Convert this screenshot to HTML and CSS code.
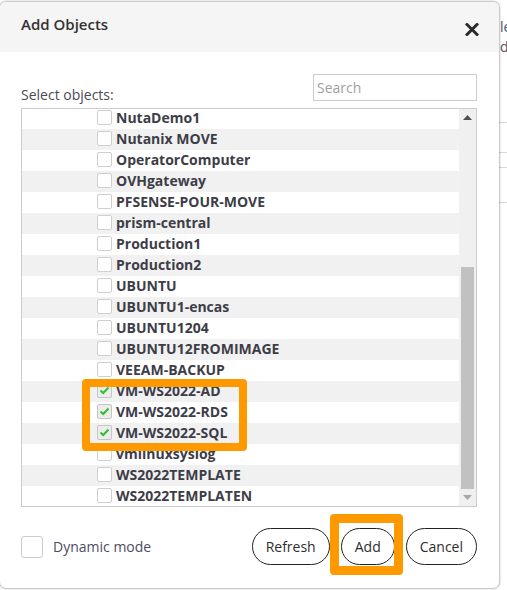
FILE: index.html
```html
<!DOCTYPE html>
<html>
<head>
<meta charset="utf-8">
<link rel="stylesheet" href="styles.css">
</head>
<body>
<div class="page">
  <div class="page-main"></div>
  <div class="page-side">
    <div class="side-text">le<br>d</div>
    <div class="side-line line-a"></div>
    <div class="side-line line-b"></div>
    <div class="side-line line-c"></div>
    <div class="side-line line-d"></div>
  </div>
</div>

<div class="modal">
  <div class="modal-header">
    <h2 class="modal-title">Add Objects</h2>
    <span class="close">
      <svg width="14" height="13" viewBox="0 0 14 13"><path d="M2 1.5 L12 11.5 M12 1.5 L2 11.5" stroke="#2b2b2b" stroke-width="3" stroke-linecap="square"/></svg>
    </span>
  </div>
  <div class="modal-body">
    <div class="toolbar">
      <span class="toolbar-label">Select objects:</span>
      <input class="search" type="text" placeholder="Search">
    </div>
    <div class="listbox">
      <div class="list-viewport">
        <div class="list-rows">
          <div class="row"><span class="cb"></span><span class="name">NutaDemo1</span></div>
          <div class="row alt"><span class="cb"></span><span class="name">Nutanix MOVE</span></div>
          <div class="row"><span class="cb"></span><span class="name">OperatorComputer</span></div>
          <div class="row alt"><span class="cb"></span><span class="name">OVHgateway</span></div>
          <div class="row"><span class="cb"></span><span class="name">PFSENSE-POUR-MOVE</span></div>
          <div class="row alt"><span class="cb"></span><span class="name">prism-central</span></div>
          <div class="row"><span class="cb"></span><span class="name">Production1</span></div>
          <div class="row alt"><span class="cb"></span><span class="name">Production2</span></div>
          <div class="row"><span class="cb"></span><span class="name">UBUNTU</span></div>
          <div class="row alt"><span class="cb"></span><span class="name">UBUNTU1-encas</span></div>
          <div class="row"><span class="cb"></span><span class="name">UBUNTU1204</span></div>
          <div class="row alt"><span class="cb"></span><span class="name">UBUNTU12FROMIMAGE</span></div>
          <div class="row"><span class="cb"></span><span class="name">VEEAM-BACKUP</span></div>
          <div class="row alt"><span class="cb checked"><svg width="11" height="9" viewBox="0 0 11 9"><path d="M1.5 4.5 L4.2 7 L9.5 1.5" fill="none" stroke="#2fc02f" stroke-width="2"/></svg></span><span class="name">VM-WS2022-AD</span></div>
          <div class="row"><span class="cb checked"><svg width="11" height="9" viewBox="0 0 11 9"><path d="M1.5 4.5 L4.2 7 L9.5 1.5" fill="none" stroke="#2fc02f" stroke-width="2"/></svg></span><span class="name">VM-WS2022-RDS</span></div>
          <div class="row alt"><span class="cb checked"><svg width="11" height="9" viewBox="0 0 11 9"><path d="M1.5 4.5 L4.2 7 L9.5 1.5" fill="none" stroke="#2fc02f" stroke-width="2"/></svg></span><span class="name">VM-WS2022-SQL</span></div>
          <div class="row"><span class="cb"></span><span class="name">vmlinuxsyslog</span></div>
          <div class="row alt"><span class="cb"></span><span class="name">WS2022TEMPLATE</span></div>
          <div class="row"><span class="cb"></span><span class="name">WS2022TEMPLATEN</span></div>
        </div>
      </div>
      <div class="scrollbar">
        <div class="sb-arrow"><svg width="9" height="5" viewBox="0 0 9 5"><path d="M0 5 L4.5 0 L9 5 Z" fill="#4f4f4f"/></svg></div>
        <div class="sb-track"><div class="sb-thumb"></div></div>
        <div class="sb-arrow"><svg width="9" height="5" viewBox="0 0 9 5"><path d="M0 0 L4.5 5 L9 0 Z" fill="#a8a8a8"/></svg></div>
      </div>
    </div>
  </div>
  <div class="modal-footer">
    <label class="dyn">
      <span class="dyn-box"></span>
      <span class="dyn-label">Dynamic mode</span>
    </label>
    <div class="buttons">
      <button class="btn">Refresh</button>
      <button class="btn">Add</button>
      <button class="btn">Cancel</button>
    </div>
  </div>
  <div class="mark mark-rows"></div>
  <div class="mark mark-add"></div>
</div>
</body>
</html>
```

FILE: styles.css
```css
html, body {
  margin: 0;
  padding: 0;
  background: #ffffff;
  font-family: "Open Sans", "Liberation Sans", sans-serif;
  overflow: hidden;
}

.page {
  display: flex;
  width: 507px;
  height: 590px;
}

.page-main {
  width: 500px;
  flex: none;
}

.page-side {
  flex: 1;
  padding-top: 17px;
  color: #4c5668;
  font-size: 14px;
}

.side-text {
  line-height: 20px;
  white-space: nowrap;
}

.side-line {
  height: 1px;
  background: #d8d8d8;
  margin-left: -4px;
}

.line-a { margin-top: 65px; }
.line-b { margin-top: 29px; }
.line-c { margin-top: 14px; }
.line-d { margin-top: 34px; }

.modal {
  position: absolute;
  left: 0;
  top: 2px;
  width: 499px;
  height: 586px;
  background: #ffffff;
  border-radius: 6px;
  box-shadow: 0 0 2px 1px rgba(0, 0, 0, 0.28);
  display: flex;
  flex-direction: column;
  box-sizing: border-box;
}

.modal-header {
  height: 50px;
  box-sizing: border-box;
  background: #f5f5f5;
  border-radius: 6px 6px 0 0;
  display: flex;
  align-items: flex-start;
  justify-content: space-between;
  padding: 11px 20px 0 21px;
}

.modal-title {
  margin: 0;
  font-size: 15px;
  font-weight: 600;
  line-height: 22px;
  color: #333333;
}

.close {
  display: flex;
  margin-top: 10px;
}

.modal-body {
  padding: 22px 22px 0 21px;
}

.toolbar {
  display: flex;
  justify-content: space-between;
  align-items: flex-end;
}

.toolbar-label {
  font-size: 14px;
  line-height: 20px;
  color: #4a4a55;
  margin-bottom: -4px;
}

.search {
  width: 164px;
  height: 27px;
  box-sizing: border-box;
  border: 1px solid #cccccc;
  border-radius: 0;
  padding: 0 4px 0 3px;
  margin: 0;
  font-family: "Open Sans", "Liberation Sans", sans-serif;
  font-size: 14px;
  outline: none;
}

.search::placeholder {
  color: #a0a0a0;
}

.listbox {
  margin-top: 7px;
  height: 399px;
  box-sizing: border-box;
  border: 1px solid #cccccc;
  display: flex;
}

.list-viewport {
  flex: 1;
  overflow: hidden;
}

.list-rows {
  margin-top: -1px;
}

.row {
  height: 21px;
  display: flex;
  align-items: flex-start;
  padding-left: 75px;
  background: #ffffff;
}

.row.alt {
  background: #f1f1f1;
}

.cb {
  width: 15px;
  height: 15px;
  box-sizing: border-box;
  border: 1px solid #cfcfcf;
  border-radius: 2px;
  background: #ffffff;
  margin-top: 2px;
  margin-right: 4px;
  flex: none;
  display: flex;
  align-items: center;
  justify-content: center;
}

.cb.checked {
  background: #ececec;
  border-color: #c6c6c6;
}

.name {
  font-size: 14px;
  font-weight: 700;
  line-height: 17px;
  padding-top: 1px;
  color: #3d3d48;
  white-space: nowrap;
}

.scrollbar {
  width: 17px;
  flex: none;
  background: #f0f0f0;
  display: flex;
  flex-direction: column;
}

.sb-arrow {
  height: 17px;
  display: flex;
  align-items: center;
  justify-content: center;
  flex: none;
}

.sb-track {
  flex: 1;
  display: flex;
  flex-direction: column;
  justify-content: flex-end;
  padding: 0 2px;
}

.sb-thumb {
  height: 222px;
  background: #c1c1c1;
}

.modal-footer {
  display: flex;
  justify-content: space-between;
  align-items: center;
  padding: 21px 22px 0 21px;
}

.dyn {
  display: flex;
  align-items: center;
}

.dyn-box {
  width: 22px;
  height: 22px;
  box-sizing: border-box;
  border: 1px solid #cccccc;
  border-radius: 3px;
  margin-right: 10px;
}

.dyn-label {
  font-size: 14px;
  color: #4d4b63;
}

.buttons {
  display: flex;
  gap: 11px;
}

.btn {
  height: 37px;
  padding: 0 13px;
  border: 1px solid #222222;
  border-radius: 19px;
  background: #ffffff;
  font-family: "Open Sans", "Liberation Sans", sans-serif;
  font-size: 14px;
  color: #2e2e2e;
}

.mark {
  position: absolute;
  border: 8px solid #ff9900;
  border-radius: 4px;
  box-sizing: border-box;
}

.mark-rows {
  left: 82px;
  top: 377px;
  width: 165px;
  height: 72px;
}

.mark-add {
  left: 330px;
  top: 512px;
  width: 73px;
  height: 61px;
  border-width: 9px;
}
```
